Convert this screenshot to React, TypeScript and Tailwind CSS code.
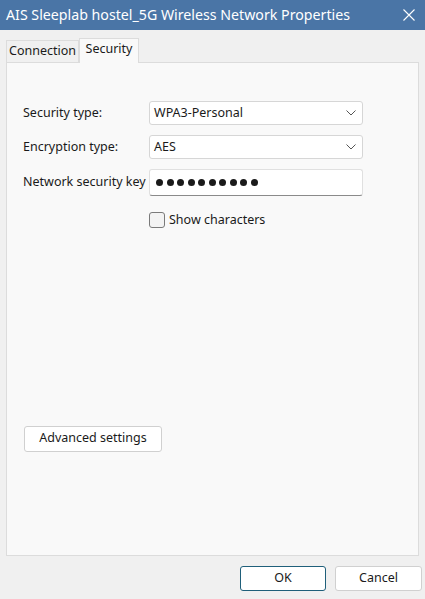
import React from "react";

const font = { fontFamily: '"Segoe UI", "Noto Sans", "Open Sans", sans-serif' };

function Chevron() {
  return (
    <svg width="10" height="6" viewBox="0 0 10 6" className="shrink-0">
      <path d="M0.5 0.5 L5 5 L9.5 0.5" fill="none" stroke="#555" strokeWidth="1" />
    </svg>
  );
}

function Select({ value }: { value: string }) {
  return (
    <div className="flex h-[24px] w-[214px] items-center justify-between rounded-[3px] border border-[#d6d6d6] bg-white pl-[4px] pr-[6px] text-[12.5px] text-[#1a1a1a]">
      <span>{value}</span>
      <Chevron />
    </div>
  );
}

export default function App() {
  return (
    <div className="flex h-[599px] w-[425px] flex-col overflow-hidden bg-[#f0f0f0]" style={font}>
      <div className="flex h-[30px] shrink-0 items-center justify-between bg-[#4a75a6] pl-[6px] pr-[10px] text-white">
        <span className="whitespace-nowrap text-[14.2px] leading-none">AIS Sleeplab hostel_5G Wireless Network Properties</span>
        <svg width="12" height="12" viewBox="0 0 12 12">
          <path d="M0.5 0.5 L11.5 11.5 M11.5 0.5 L0.5 11.5" stroke="white" strokeWidth="1.1" />
        </svg>
      </div>
      <div className="flex h-[32px] shrink-0 items-end pl-[6px] pt-[8px]">
        <div className="flex h-[22px] w-[73px] items-center justify-center border border-b-0 border-[#dcdcdc] bg-[#f0f0f0] text-[12.5px] text-[#1a1a1a]">
          Connection
        </div>
        <div className="relative -mb-px flex h-[25px] w-[60px] items-center justify-center border border-b-0 border-[#dcdcdc] bg-[#f9f9f9] pb-[3px] text-[12.5px] text-[#1a1a1a]">
          Security
        </div>
      </div>
      <div className="mx-[6px] flex h-[494px] shrink-0 flex-col border border-[#dcdcdc] bg-[#f9f9f9] pl-[16px] pt-[38px]">
        <div className="flex flex-col gap-[10px]">
          <div className="flex items-center">
            <span className="w-[126px] whitespace-nowrap text-[12.5px] text-[#1a1a1a]">Security type:</span>
            <Select value="WPA3-Personal" />
          </div>
          <div className="flex items-center">
            <span className="w-[126px] whitespace-nowrap text-[12.5px] text-[#1a1a1a]">Encryption type:</span>
            <Select value="AES" />
          </div>
          <div className="flex items-center">
            <span className="w-[126px] whitespace-nowrap text-[12.5px] text-[#1a1a1a]">Network security key</span>
            <div className="flex h-[27px] w-[214px] items-center gap-[3.5px] rounded-[3px] border border-[#e0e0e0] border-b-[#8a8a8a] bg-white pl-[6px]">
              {Array.from({ length: 10 }).map((_, i) => (
                <span key={i} className="h-[7px] w-[7px] rounded-full bg-[#1a1a1a]" />
              ))}
            </div>
          </div>
        </div>
        <div className="ml-[126px] mt-[15px] flex items-center gap-[4px]">
          <div className="h-[16px] w-[16px] rounded-[3px] border border-[#7a7a7a] bg-[#f3f3f3]" />
          <span className="text-[12.5px] text-[#1a1a1a]">Show characters</span>
        </div>
        <div className="ml-[1px] mt-[196px] flex h-[26px] w-[138px] items-center justify-center rounded-[3px] border border-[#d0d0d0] bg-white text-[12.5px] text-[#1a1a1a]">
          Advanced settings
        </div>
      </div>
      <div className="flex justify-end gap-[9px] pr-[3px] pt-[10px]">
        <div className="flex h-[25px] w-[86px] items-center justify-center rounded-[3px] border border-[#1f5f7a] bg-white text-[12.5px] text-[#1a1a1a]">
          OK
        </div>
        <div className="flex h-[25px] w-[87px] items-center justify-center rounded-[3px] border border-[#d0d0d0] bg-white text-[12.5px] text-[#1a1a1a]">
          Cancel
        </div>
      </div>
    </div>
  );
}
